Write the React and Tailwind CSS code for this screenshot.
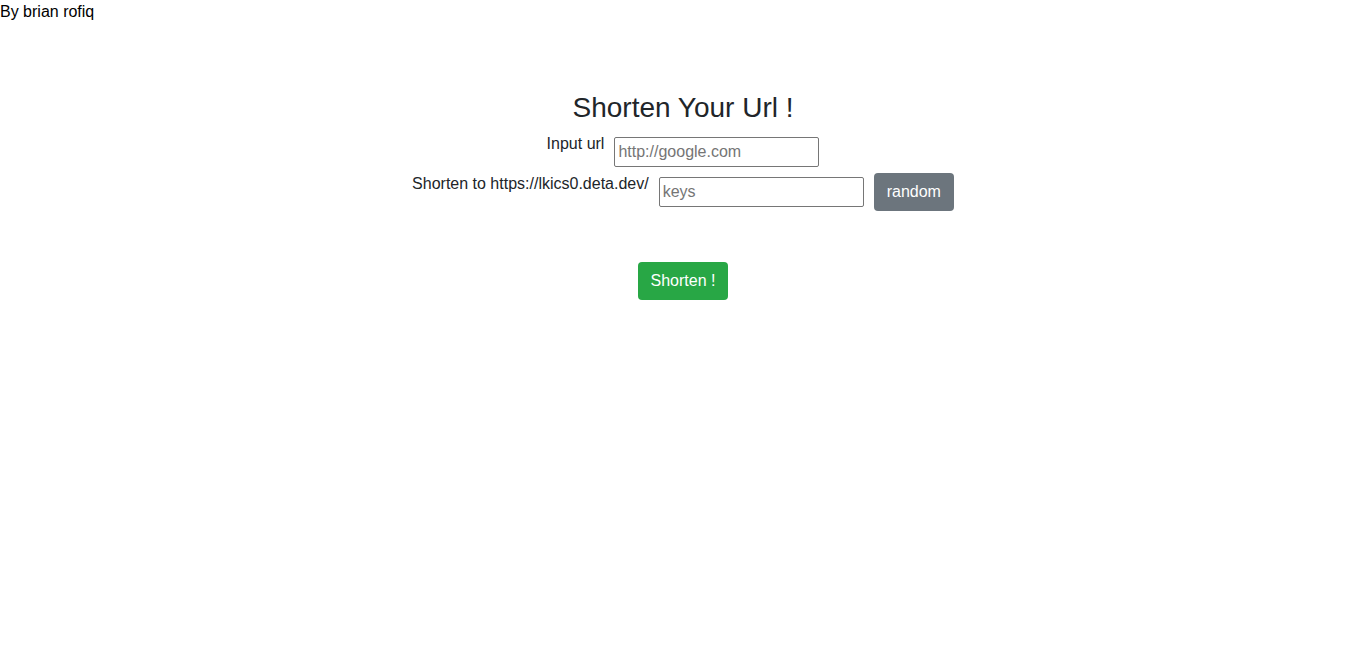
import { useState } from 'react'

const App = () => {
  const [url, setUrl] = useState('')
  const [keys, setKeys] = useState('')

  const randomKey = () => {
    const chars = 'abcdefghijklmnopqrstuvwxyz0123456789'
    let out = ''
    for (let i = 0; i < 6; i++) out += chars[Math.floor(Math.random() * chars.length)]
    setKeys(out)
  }

  return (
    <div className="min-h-screen bg-white text-[#212529] text-base leading-6 font-['Liberation_Sans',Arial,sans-serif]">
      <div className="text-black">By brian rofiq</div>
      <div className="flex flex-col items-center mt-[67px]">
        <h3 className="text-[28px] leading-[1.2] font-normal mb-[7px]">Shorten Your Url !</h3>
        <div className="flex items-start gap-[10px] h-[40px]">
          <label>Input url</label>
          <input
            value={url}
            onChange={(e) => setUrl(e.target.value)}
            placeholder="http://google.com"
            className="mt-[5px] w-[205px] h-[30px] px-[3px] border border-[#767676] rounded-[2px] text-base placeholder:text-[#757575] outline-none"
          />
        </div>
        <div className="flex items-start gap-[10px]">
          <label>Shorten to https://lkics0.deta.dev/</label>
          <input
            value={keys}
            onChange={(e) => setKeys(e.target.value)}
            placeholder="keys"
            className="mt-[5px] w-[205px] h-[30px] px-[3px] border border-[#767676] rounded-[2px] text-base placeholder:text-[#757575] outline-none"
          />
          <button
            onClick={randomKey}
            className="mt-[1px] h-[38px] px-[13px] rounded bg-[#6c757d] text-white text-base"
          >
            random
          </button>
        </div>
        <button className="mt-[51px] h-[38px] px-[13px] rounded bg-[#28a745] text-white text-base">
          Shorten !
        </button>
      </div>
    </div>
  )
}

export default App
